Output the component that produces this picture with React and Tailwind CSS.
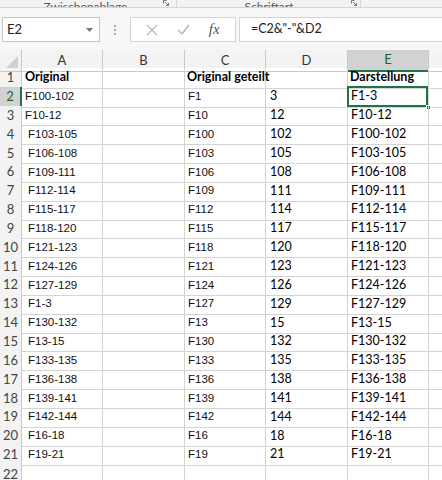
import React from "react";

const rows = [
  ["F100-102", "F1", "3", "F1-3", false],
  ["F10-12", "F10", "12", "F10-12", false],
  ["F103-105", "F100", "102", "F100-102", true],
  ["F106-108", "F103", "105", "F103-105", true],
  ["F109-111", "F106", "108", "F106-108", true],
  ["F112-114", "F109", "111", "F109-111", true],
  ["F115-117", "F112", "114", "F112-114", true],
  ["F118-120", "F115", "117", "F115-117", true],
  ["F121-123", "F118", "120", "F118-120", true],
  ["F124-126", "F121", "123", "F121-123", true],
  ["F127-129", "F124", "126", "F124-126", true],
  ["F1-3", "F127", "129", "F127-129", true],
  ["F130-132", "F13", "15", "F13-15", true],
  ["F13-15", "F130", "132", "F130-132", true],
  ["F133-135", "F133", "135", "F133-135", true],
  ["F136-138", "F136", "138", "F136-138", true],
  ["F139-141", "F139", "141", "F139-141", true],
  ["F142-144", "F142", "144", "F142-144", true],
  ["F16-18", "F16", "18", "F16-18", true],
  ["F19-21", "F19", "21", "F19-21", true],
];

const grid = "grid grid-cols-[22px_81px_82px_81px_82px_81px_1fr]";
const cell = "border-r border-b border-[#d4d4d4] overflow-visible whitespace-nowrap flex items-center";
const arial = { fontFamily: '"Liberation Sans", Arial, sans-serif' };
const cal = { fontFamily: 'Lato, "Open Sans", sans-serif' };

function Launcher() {
  return (
    <svg width="6" height="6" viewBox="0 0 6 6" className="text-[#777]">
      <path d="M0.5 0.5h3M0.5 0.5v3M2 2l3.5 3.5M5.5 3v2.5H3" stroke="currentColor" strokeWidth="1" fill="none" />
    </svg>
  );
}

export default function App() {
  return (
    <div className="w-[442px] h-[480px] overflow-hidden bg-white text-black" style={cal}>
      {/* ribbon strip */}
      <div className="h-[8px] bg-[#f3f3f3] border-b border-[#d5d5d5] flex items-end overflow-hidden text-[12px] text-[#555] leading-[14px]">
        <div className="w-[163px] flex justify-center"><span className="-mb-[7px] pl-[8px]">Zwischenablage</span></div>
        <div className="w-[13px] flex items-end pb-[1px]"><Launcher /></div>
        <div className="w-px h-full bg-[#d5d5d5]" />
        <div className="w-[174px] flex justify-center"><span className="-mb-[7px] pl-[10px]">Schriftart</span></div>
        <div className="w-[9px] flex items-end pb-[1px]"><Launcher /></div>
        <div className="w-px h-full bg-[#d5d5d5]" />
      </div>
      {/* formula bar */}
      <div className="h-[42px] bg-[#f7f7f7] flex items-start pt-[9px]">
        <div className="ml-[2px] w-[98px] h-[25px] bg-white border border-[#c6c6c6] flex items-center justify-between pl-[4px] pr-[6px] text-[13px] text-[#222]">
          <span>E2</span>
          <svg width="7" height="4" viewBox="0 0 7 4"><path d="M0 0h7L3.5 4z" fill="#777" /></svg>
        </div>
        <div className="w-[30px] h-[25px] flex flex-col items-center justify-center gap-[2px]">
          <div className="w-[2px] h-[2px] bg-[#aaa]" />
          <div className="w-[2px] h-[2px] bg-[#aaa]" />
          <div className="w-[2px] h-[2px] bg-[#aaa]" />
        </div>
        <div className="w-[106px] h-[25px] bg-white border border-[#d4d4d4] flex items-center justify-around px-[6px]">
          <svg width="12" height="12" viewBox="0 0 12 12"><path d="M1 1l10 10M11 1L1 11" stroke="#b5b5b5" strokeWidth="1.2" /></svg>
          <svg width="13" height="11" viewBox="0 0 13 11"><path d="M1 6l4 4 7-9" stroke="#b5b5b5" strokeWidth="1.4" fill="none" /></svg>
          <span className="italic text-[15px] text-[#555] leading-none" style={{ fontFamily: '"Liberation Serif", serif' }}>fx</span>
        </div>
        <div className="ml-[3px] flex-1 h-[25px] bg-white border border-r-0 border-[#d4d4d4] flex items-center pl-[11px] text-[12.5px] text-[#222]">
          =C2&amp;"-"&amp;D2
        </div>
      </div>
      {/* column headers */}
      <div className={grid + " h-[18px] bg-[#f3f3f3] text-[13px] text-[#333]"}>
        <div className="border-r border-b border-[#c8c8c8] relative">
          <svg className="absolute right-[3px] bottom-[3px]" width="12" height="12" viewBox="0 0 12 12"><path d="M12 0V12H0z" fill="#d0d0d0" /></svg>
        </div>
        {["A", "B", "C", "D"].map((c) => (
          <div key={c} className="border-r border-b border-[#c8c8c8] flex items-center justify-center">{c}</div>
        ))}
        <div className="border-r border-[#c8c8c8] border-b-2 border-b-[#217346] bg-[#d2d2d2] flex items-center justify-center text-[#1f5f3b]">E</div>
        <div className="border-b border-[#c8c8c8]" />
      </div>
      {/* row 1 */}
      <div className={grid + " h-[19px] text-[12.5px]"}>
        <div className="bg-[#f3f3f3] border-r border-b border-[#c8c8c8] flex items-center justify-center text-[13px] text-[#444]">1</div>
        <div className={cell + " pl-[3px] font-bold"}>Original</div>
        <div className={cell} />
        <div className={cell + " pl-[2px] font-bold relative"}><span className="absolute left-[2px]">Original geteilt</span></div>
        <div className="border-b border-r border-[#d4d4d4]" />
        <div className={cell + " pl-[2px] font-bold"}>Darstellung</div>
        <div className="border-b border-[#d4d4d4]" />
      </div>
      {rows.map((r, i) => {
        const n = i + 2;
        const sel = n === 2;
        return (
          <div key={n} className={grid + " h-[18.85px]"}>
            <div className={"border-b border-[#c8c8c8] flex items-center justify-center text-[13px] " + (sel ? "bg-[#d2d2d2] border-r-2 border-r-[#217346] text-[#1f5f3b]" : "bg-[#f3f3f3] border-r text-[#444]")}>{n}</div>
            <div className={cell + " text-[11.5px] text-[#111] " + (r[4] ? "pl-[6px]" : "pl-[3px]")} style={arial}>{r[0]}</div>
            <div className={cell} />
            <div className={cell + " text-[11.5px] text-[#111] pl-[3px]"} style={arial}>{r[1]}</div>
            <div className={cell + " text-[12.5px] pl-[4px]"}>{r[2]}</div>
            <div className={cell + " text-[12.5px] pl-[3px] relative"}>
              {r[3]}
              {sel && (
                <>
                  <div className="absolute -left-px -top-px w-[calc(100%+1px)] h-[calc(100%+1px)] border-2 border-[#217346]" />
                  <div className="absolute -right-[3px] -bottom-[3px] w-[5px] h-[5px] bg-[#217346] border border-white" />
                </>
              )}
            </div>
            <div className="border-b border-[#d4d4d4]" />
          </div>
        );
      })}
      <div className={grid + " h-[20px]"}>
        <div className="bg-[#f3f3f3] border-r border-[#c8c8c8] flex items-start pt-[1px] justify-center text-[13px] text-[#444]">22</div>
        <div className="border-r border-[#d4d4d4]" />
        <div className="border-r border-[#d4d4d4]" />
        <div className="border-r border-[#d4d4d4]" />
        <div className="border-r border-[#d4d4d4]" />
        <div className="border-r border-[#d4d4d4]" />
        <div />
      </div>
    </div>
  );
}
